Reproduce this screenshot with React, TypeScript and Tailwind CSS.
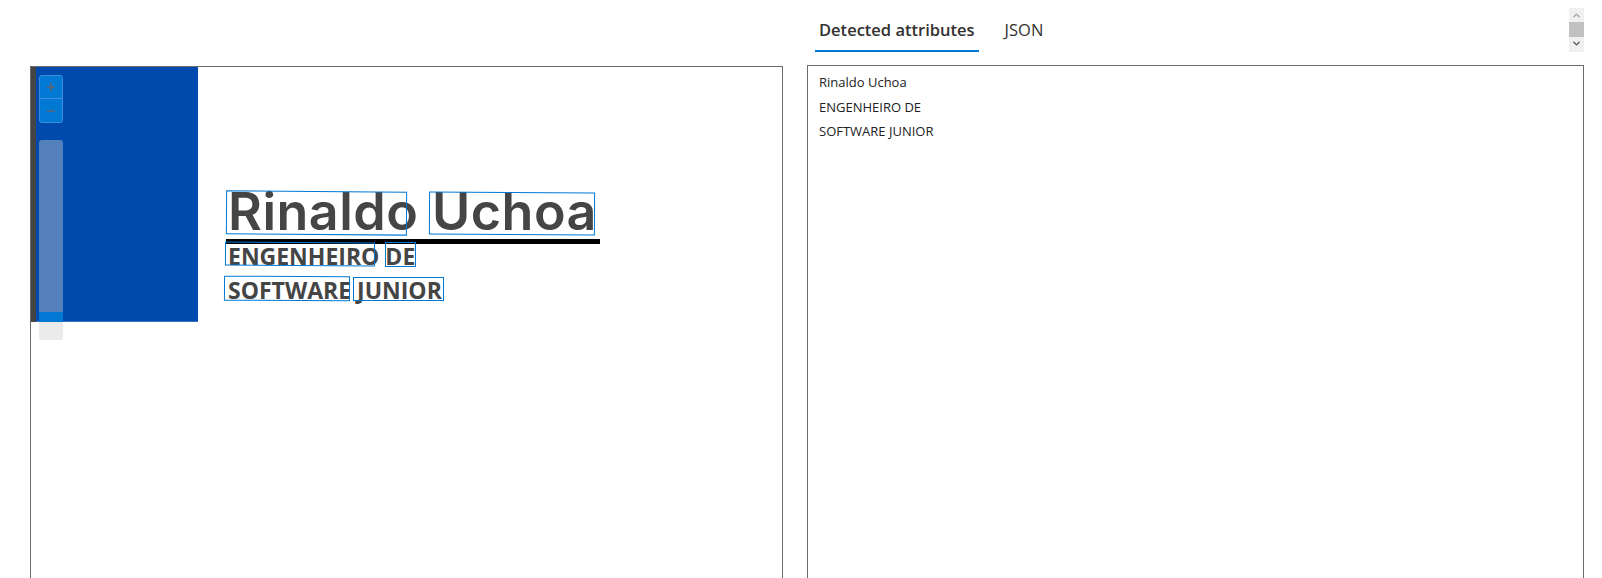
import { ChevronUp, ChevronDown } from 'lucide-react'

const boxes = [
  { left: 195, top: 124, w: 181, h: 44, rot: 'rotate-[0.4deg]' },
  { left: 398, top: 125, w: 166, h: 43, rot: 'rotate-[0.3deg]' },
  { left: 194, top: 175, w: 150, h: 24, rot: 'rotate-[0.3deg]' },
  { left: 354, top: 175, w: 31, h: 25, rot: 'rotate-[0deg]' },
  { left: 193, top: 209, w: 126, h: 25, rot: 'rotate-[0.3deg]' },
  { left: 322, top: 210, w: 91, h: 24, rot: 'rotate-[0deg]' },
]

function ZoomControls() {
  return (
    <div className="absolute left-[8px] top-[8px] flex flex-col gap-[17px]">
      <div className="w-[24px] rounded-[3px] border border-[#3d8fdc] bg-[#0078d4] flex flex-col overflow-hidden">
        <button className="h-[23px] flex items-center justify-center border-b border-[#3d8fdc]">
          <svg width="10" height="10" viewBox="0 0 10 10">
            <path d="M5 1v8M1 5h8" stroke="#5b6775" strokeWidth="1.6" />
          </svg>
        </button>
        <button className="h-[23px] flex items-center justify-center">
          <svg width="10" height="10" viewBox="0 0 10 10">
            <path d="M1 5h8" stroke="#5b6775" strokeWidth="1.6" />
          </svg>
        </button>
      </div>
      <div className="w-[24px] h-[200px] rounded-[3px] overflow-hidden flex flex-col">
        <div className="h-[172px] bg-[#5481bb]" />
        <div className="h-[10px] bg-[#0078d4]" />
        <div className="flex-1 bg-[#ebebeb]" />
      </div>
    </div>
  )
}

function ResumeImage() {
  return (
    <div className="relative flex h-[255px] w-[600px]">
      {/* left blue column of the resume */}
      <div className="w-[5px] bg-[#454545]" />
      <div className="w-[162px] bg-[#004aad] border-b border-[#3f72c0]" />
      <div className="pl-[30px] pt-[118px] text-[#454545]">
        <div className="font-['Inter',sans-serif] font-semibold text-[52px] leading-[54px] tracking-[0.5px] whitespace-nowrap">
          Rinaldo Uchoa
        </div>
        <div className="-ml-[2px] h-[5px] w-[374px] bg-black" />
        <div className="font-['Open_Sans',sans-serif] font-bold text-[23px] leading-[34px] mt-[-5px] whitespace-nowrap">
          <div>ENGENHEIRO DE</div>
          <div>SOFTWARE JUNIOR</div>
        </div>
      </div>
      {boxes.map((b, i) => (
        <div
          key={i}
          className={`absolute border-[1.5px] border-[#0078d4] ${b.rot}`}
          style={{ left: b.left, top: b.top, width: b.w, height: b.h }}
        />
      ))}
    </div>
  )
}

export default function App() {
  return (
    <div className="w-[1602px] h-[578px] overflow-hidden bg-white font-['Open_Sans',sans-serif] relative">
      <div className="flex pl-[30px] pr-[18px] gap-[24px] h-full">
        {/* Left: document preview */}
        <div className="w-[753px] flex flex-col pt-[66px]">
          <div className="relative flex-1 min-h-[600px] border border-[#6b6b6b] border-b-0 overflow-hidden">
            <ResumeImage />
            <ZoomControls />
          </div>
        </div>

        {/* Right: results */}
        <div className="w-[777px] flex flex-col">
          <div className="h-[65px] shrink-0 flex items-start pl-[8px] gap-[22px]">
            <div className="pt-[15px] px-[4px] border-b-2 border-[#0078d4] h-[52px]">
              <span className="text-[16.5px] font-semibold text-[#323130] leading-[30px]">Detected attributes</span>
            </div>
            <div className="pt-[15px] px-[4px] h-[52px]">
              <span className="text-[16.5px] text-[#323130] leading-[30px]">JSON</span>
            </div>
          </div>
          <div className="flex-1 min-h-[600px] border border-[#6b6b6b] border-b-0 px-[11px] pt-[4px] text-[13px] leading-[24.5px] text-[#222]">
            <div>Rinaldo Uchoa</div>
            <div>ENGENHEIRO DE</div>
            <div>SOFTWARE JUNIOR</div>
          </div>
        </div>
      </div>

      {/* tab strip scrollbar */}
      <div className="absolute left-[1569px] top-[8px] w-[15px] h-[44px] bg-[#f0f0f0] flex flex-col items-center">
        <ChevronUp size={11} strokeWidth={3} className="text-[#a3a3a3] mt-[2px]" />
        <div className="w-[15px] h-[15px] bg-[#c1c1c1] mt-[1px]" />
        <ChevronDown size={11} strokeWidth={3} className="text-[#505050] mt-[1px]" />
      </div>
    </div>
  )
}
